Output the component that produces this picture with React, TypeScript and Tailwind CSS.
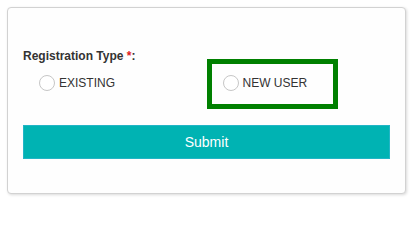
import React from "react";

function Radio({ label, highlight }: { label: string; highlight?: boolean }) {
  return (
    <div className="relative pl-4">
      {highlight && (
        <div className="pointer-events-none absolute left-0 top-[-16px] h-[50px] w-[131px] border-[5px] border-[#008000]" />
      )}
      <label className="flex h-4 items-center gap-[4px]">
        <span className="block h-4 w-4 rounded-full border border-[#c6c6c6] bg-white" />
        <span className="text-[12px] leading-[14px] text-[#333333]">{label}</span>
      </label>
    </div>
  );
}

export default function App() {
  return (
    <div className="h-[200px] overflow-hidden bg-white pl-[7px] pt-[7px]" style={{ fontFamily: '"Liberation Sans", Arial, sans-serif' }}>
      <div className="w-[399px] rounded-[4px] border border-[#d2d2d2] bg-[#fefefe] px-[15px] pt-[41px] pb-[34px] shadow-[1px_1px_3px_rgba(0,0,0,0.15)]">
        <div className="text-[12px] font-bold leading-[14px] text-[#333333]">
          Registration Type <span className="text-[#e02020]">*</span>:
        </div>
        <div className="mt-[12px] grid grid-cols-2">
          <Radio label="EXISTING" />
          <Radio label="NEW USER" highlight />
        </div>
        <button className="mt-[34px] flex h-[34px] w-full items-center justify-center border border-[#22b5c6] bg-[#00b3b3] text-[14px] text-white">
          Submit
        </button>
      </div>
    </div>
  );
}
